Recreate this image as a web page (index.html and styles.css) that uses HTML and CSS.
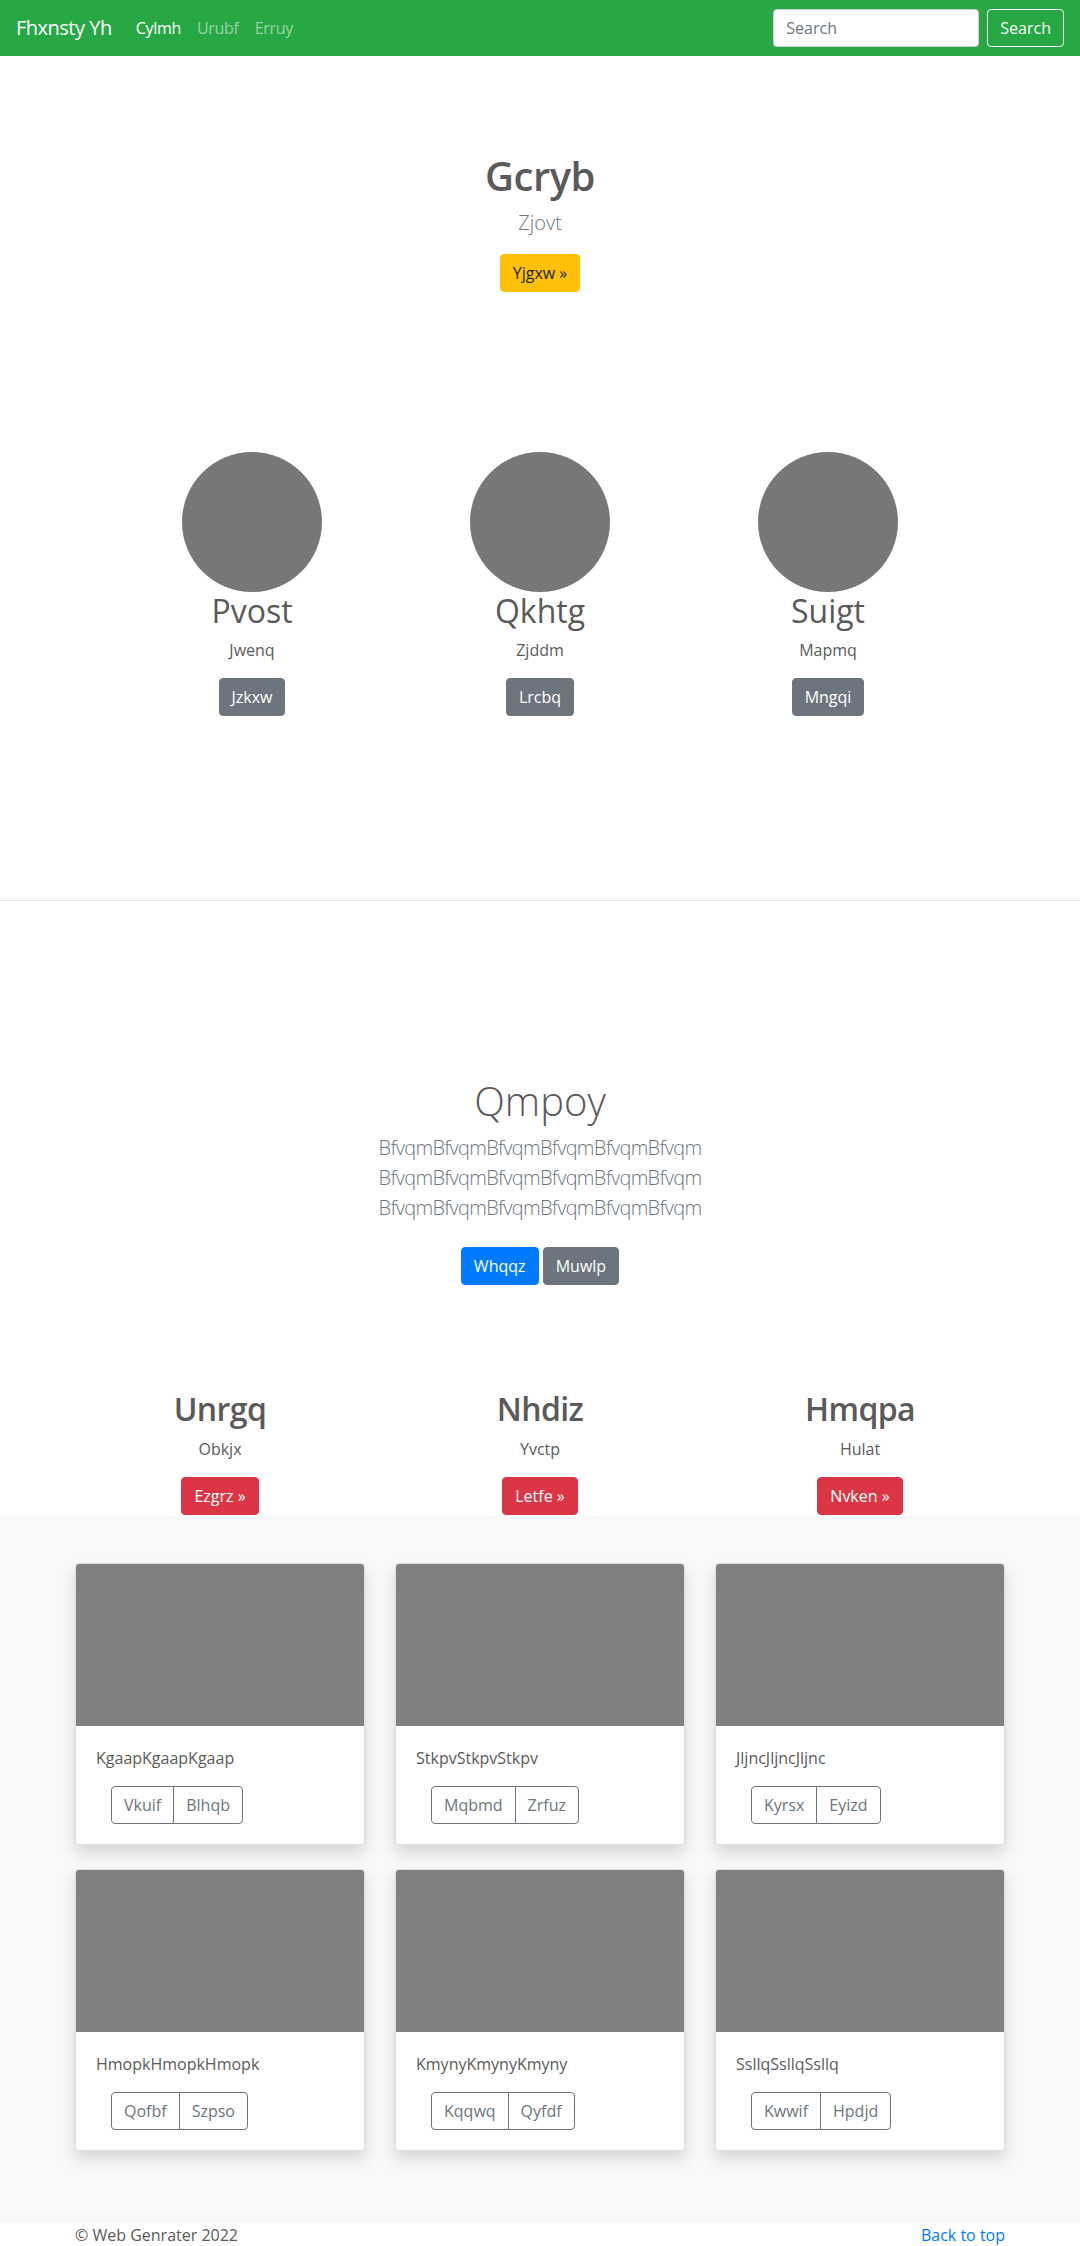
FILE: index.html
```html
<!DOCTYPE html>
<html lang="en">
<head>
<meta charset="utf-8">
<title>Fhxnsty Yh</title>
<link rel="stylesheet" href="styles.css">
</head>
<body>
<nav class="navbar">
  <a class="brand" href="#">Fhxnsty Yh</a>
  <ul class="nav-links">
    <li><a class="nav-link active" href="#">Cylmh</a></li>
    <li><a class="nav-link" href="#">Urubf</a></li>
    <li><a class="nav-link" href="#">Erruy</a></li>
  </ul>
  <form class="search">
    <input class="search-input" type="text" placeholder="Search">
    <button class="btn btn-outline-light" type="button">Search</button>
  </form>
</nav>

<main>
  <section class="hero">
    <h1 class="hero-title">Gcryb</h1>
    <p class="lead muted">Zjovt</p>
    <p class="actions"><a class="btn btn-warning" href="#">Yjgxw »</a></p>
  </section>

  <section class="features">
    <div class="feature">
      <div class="circle"></div>
      <h2 class="feature-name">Pvost</h2>
      <p class="feature-text">Jwenq</p>
      <p class="actions"><a class="btn btn-secondary" href="#">Jzkxw</a></p>
    </div>
    <div class="feature">
      <div class="circle"></div>
      <h2 class="feature-name">Qkhtg</h2>
      <p class="feature-text">Zjddm</p>
      <p class="actions"><a class="btn btn-secondary" href="#">Lrcbq</a></p>
    </div>
    <div class="feature">
      <div class="circle"></div>
      <h2 class="feature-name">Suigt</h2>
      <p class="feature-text">Mapmq</p>
      <p class="actions"><a class="btn btn-secondary" href="#">Mngqi</a></p>
    </div>
  </section>

  <hr class="divider">

  <section class="promo">
    <h1 class="promo-title">Qmpoy</h1>
    <p class="lead muted promo-text">BfvqmBfvqmBfvqmBfvqmBfvqmBfvqm<br>BfvqmBfvqmBfvqmBfvqmBfvqmBfvqm<br>BfvqmBfvqmBfvqmBfvqmBfvqmBfvqm</p>
    <p class="actions"><a class="btn btn-primary" href="#">Whqqz</a> <a class="btn btn-secondary" href="#">Muwlp</a></p>
  </section>

  <section class="columns">
    <div class="column">
      <h2 class="column-title">Unrgq</h2>
      <p class="column-text">Obkjx</p>
      <p class="actions"><a class="btn btn-danger" href="#">Ezgrz »</a></p>
    </div>
    <div class="column">
      <h2 class="column-title">Nhdiz</h2>
      <p class="column-text">Yvctp</p>
      <p class="actions"><a class="btn btn-danger" href="#">Letfe »</a></p>
    </div>
    <div class="column">
      <h2 class="column-title">Hmqpa</h2>
      <p class="column-text">Hulat</p>
      <p class="actions"><a class="btn btn-danger" href="#">Nvken »</a></p>
    </div>
  </section>

  <section class="album">
    <div class="album-grid">
      <div class="card">
        <div class="card-img"></div>
        <div class="card-body">
          <p class="card-text">KgaapKgaapKgaap</p>
          <div class="btn-group"><button class="btn btn-outline-secondary" type="button">Vkuif</button><button class="btn btn-outline-secondary" type="button">Blhqb</button></div>
        </div>
      </div>
      <div class="card">
        <div class="card-img"></div>
        <div class="card-body">
          <p class="card-text">StkpvStkpvStkpv</p>
          <div class="btn-group"><button class="btn btn-outline-secondary" type="button">Mqbmd</button><button class="btn btn-outline-secondary" type="button">Zrfuz</button></div>
        </div>
      </div>
      <div class="card">
        <div class="card-img"></div>
        <div class="card-body">
          <p class="card-text">JljncJljncJljnc</p>
          <div class="btn-group"><button class="btn btn-outline-secondary" type="button">Kyrsx</button><button class="btn btn-outline-secondary" type="button">Eyizd</button></div>
        </div>
      </div>
      <div class="card">
        <div class="card-img"></div>
        <div class="card-body">
          <p class="card-text">HmopkHmopkHmopk</p>
          <div class="btn-group"><button class="btn btn-outline-secondary" type="button">Qofbf</button><button class="btn btn-outline-secondary" type="button">Szpso</button></div>
        </div>
      </div>
      <div class="card">
        <div class="card-img"></div>
        <div class="card-body">
          <p class="card-text">KmynyKmynyKmyny</p>
          <div class="btn-group"><button class="btn btn-outline-secondary" type="button">Kqqwq</button><button class="btn btn-outline-secondary" type="button">Qyfdf</button></div>
        </div>
      </div>
      <div class="card">
        <div class="card-img"></div>
        <div class="card-body">
          <p class="card-text">SsllqSsllqSsllq</p>
          <div class="btn-group"><button class="btn btn-outline-secondary" type="button">Kwwif</button><button class="btn btn-outline-secondary" type="button">Hpdjd</button></div>
        </div>
      </div>
    </div>
  </section>
</main>

<footer class="footer">
  <p class="copyright">© Web Genrater 2022</p>
  <p class="back"><a href="#">Back to top</a></p>
</footer>
</body>
</html>
```

FILE: styles.css
```css
* { box-sizing: border-box; }
html, body { margin: 0; padding: 0; }
body {
  font-family: "Open Sans", "Noto Sans", "Liberation Sans", sans-serif;
  font-size: 16px;
  line-height: 1.5;
  color: #5a5a5a;
  background: #fff;
}
a { text-decoration: none; }
h1, h2, p { margin: 0; }

/* navbar */
.navbar {
  display: flex;
  align-items: center;
  height: 56px;
  padding: 8px 16px;
  background: #28a745;
}
.brand {
  color: #fff;
  font-size: 20px;
  line-height: 30px;
  padding: 5px 0;
  margin-right: 16px;
  letter-spacing: -0.5px;
}
.nav-links {
  display: flex;
  list-style: none;
  margin: 0;
  padding: 0;
}
.nav-link {
  display: block;
  padding: 8px;
  color: rgba(255, 255, 255, 0.5);
  letter-spacing: -0.3px;
}
.nav-link.active { color: #fff; }
.search {
  margin-left: auto;
  display: flex;
  align-items: center;
}
.search-input {
  width: 206px;
  height: 38px;
  padding: 6px 12px;
  font-family: inherit;
  font-size: 16px;
  line-height: 1.5;
  color: #495057;
  background: #fff;
  border: 1px solid #ced4da;
  border-radius: 4px;
  margin-right: 8px;
}
.search-input::placeholder { color: #6c757d; }

/* buttons */
.btn {
  display: inline-block;
  font-family: inherit;
  font-size: 16px;
  font-weight: 400;
  line-height: 24px;
  padding: 6px 12px;
  border: 1px solid transparent;
  border-radius: 4px;
  text-align: center;
  vertical-align: middle;
  cursor: pointer;
}
.btn-outline-light { color: #f8f9fa; border-color: #f8f9fa; background: transparent; }
.btn-warning { color: #212529; background: #ffc107; border-color: #ffc107; }
.btn-secondary { color: #fff; background: #6c757d; border-color: #6c757d; }
.btn-primary { color: #fff; background: #007bff; border-color: #007bff; }
.btn-danger { color: #fff; background: #dc3545; border-color: #dc3545; }
.btn-outline-secondary { color: #6c757d; background: transparent; border-color: #6c757d; }

.lead { font-size: 20px; font-weight: 300; line-height: 30px; }
.muted { color: #6c757d; }
.actions { margin: 0; }

/* hero */
.hero {
  text-align: center;
  padding-top: 96px;
}
.hero-title {
  font-size: 40px;
  font-weight: 600;
  line-height: 48px;
  margin-bottom: 8px;
  letter-spacing: -0.5px;
}
.hero .lead { margin-bottom: 16px; }

/* features */
.features {
  width: 864px;
  margin: 160px auto 0;
  display: grid;
  grid-template-columns: repeat(3, 1fr);
  text-align: center;
}
.circle {
  width: 140px;
  height: 140px;
  border-radius: 50%;
  background: #777;
  margin: 0 auto;
}
.feature-name {
  font-size: 32px;
  font-weight: 400;
  line-height: 38.4px;
  margin-bottom: 8px;
}
.feature-text { margin-bottom: 16px; }

.divider {
  margin: 184px 0 0;
  height: 0;
  border: 0;
  border-top: 1px solid rgba(0, 0, 0, 0.1);
}

/* promo */
.promo {
  text-align: center;
  margin-top: 176px;
}
.promo-title {
  font-size: 40px;
  font-weight: 300;
  line-height: 48px;
  margin-bottom: 8px;
}
.promo-text {
  margin-bottom: 24px;
  letter-spacing: -0.7px;
}

/* columns */
.columns {
  width: 960px;
  margin: 105px auto 0;
  display: grid;
  grid-template-columns: repeat(3, 1fr);
  text-align: center;
}
.column { padding: 0 15px; }
.column-title {
  font-size: 32px;
  font-weight: 600;
  line-height: 38.4px;
  margin-bottom: 8px;
  letter-spacing: -0.6px;
}
.column-text { margin-bottom: 16px; }

/* album */
.album {
  background: #f8f9fa;
  padding: 48px 0 72px;
}
.album-grid {
  width: 960px;
  margin: 0 auto;
  padding: 0 15px;
  display: grid;
  grid-template-columns: repeat(3, 1fr);
  column-gap: 30px;
  row-gap: 24px;
}
.card {
  background: #fff;
  border: 1px solid rgba(0, 0, 0, 0.125);
  border-radius: 4px;
  box-shadow: 0 8px 16px rgba(0, 0, 0, 0.15);
  overflow: hidden;
}
.card-img {
  height: 162px;
  background: #808080;
}
.card-body { padding: 20px; }
.card-text { margin-bottom: 16px; }
.btn-group {
  display: inline-flex;
  margin-left: 15px;
}
.btn-group .btn:first-child { border-radius: 4px 0 0 4px; }
.btn-group .btn:last-child { border-radius: 0 4px 4px 0; margin-left: -1px; }

/* footer */
.footer {
  width: 960px;
  margin: 0 auto;
  padding: 0 15px;
  display: flex;
  justify-content: space-between;
}
.back a { color: #007bff; }
```
